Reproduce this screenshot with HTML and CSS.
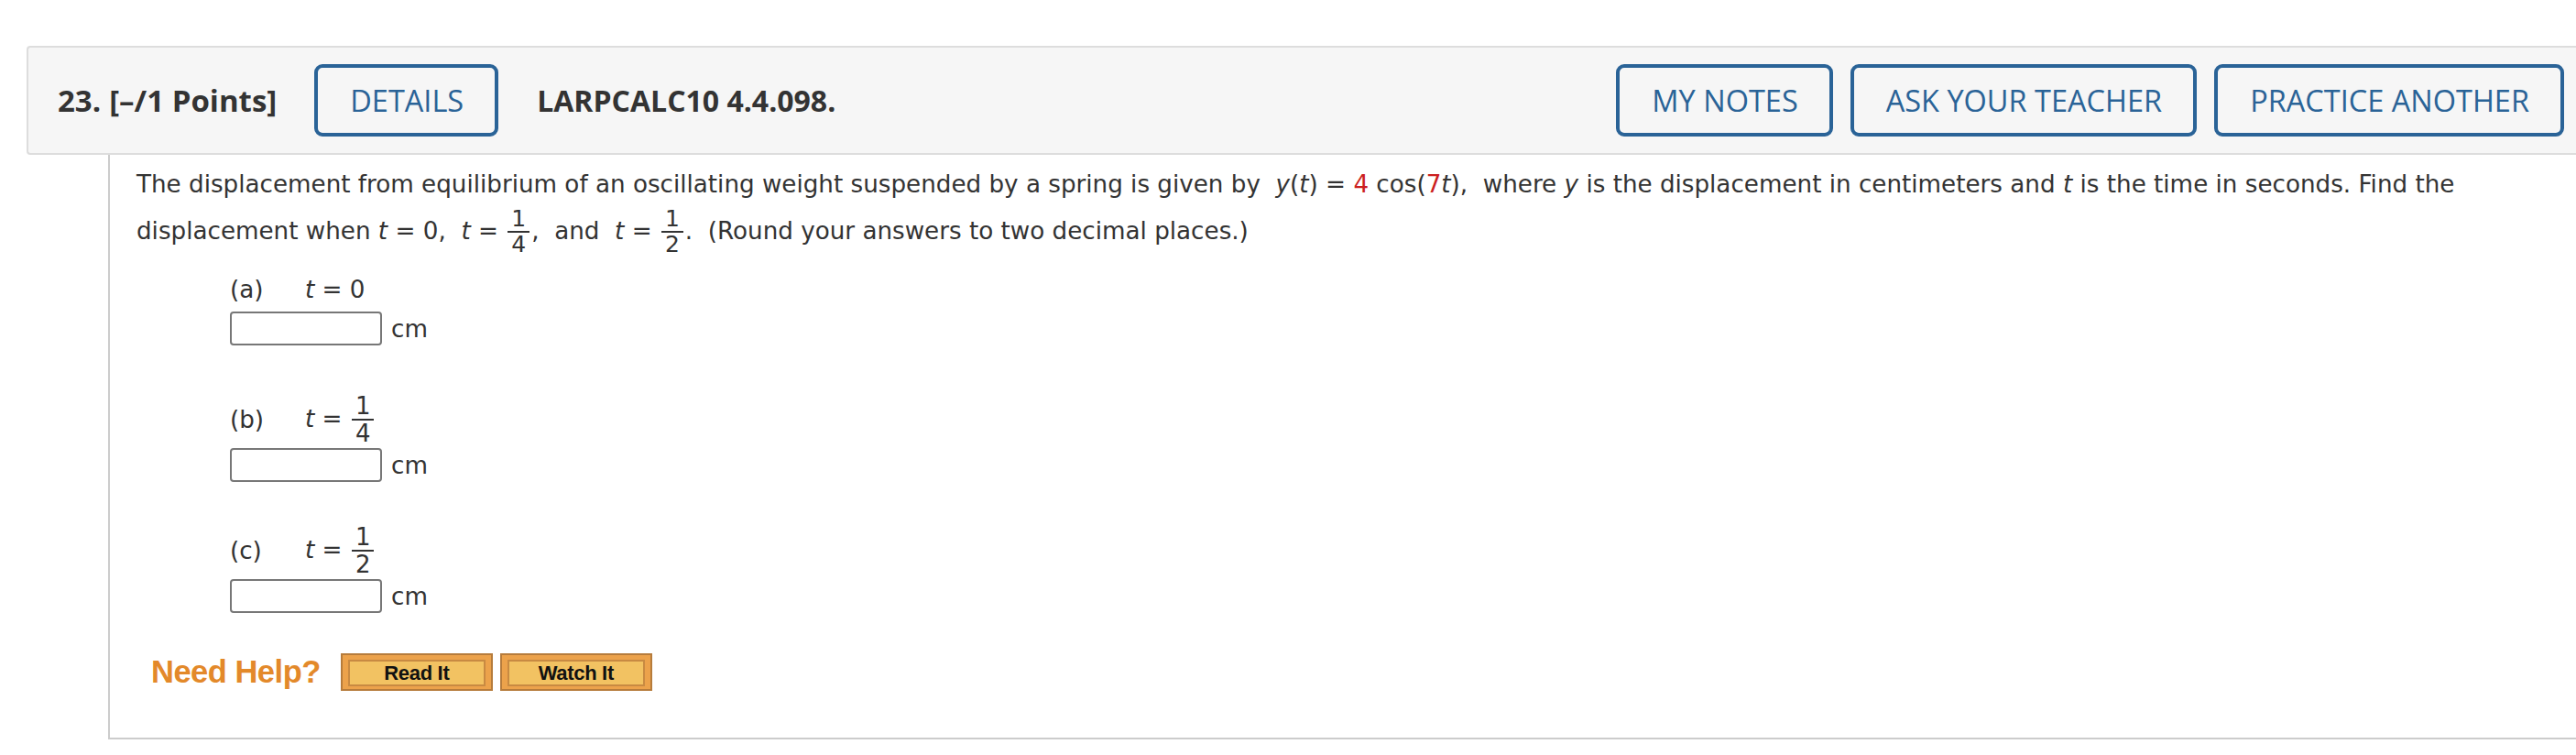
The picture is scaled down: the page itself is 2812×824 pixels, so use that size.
FILE: index.html
```html
<!DOCTYPE html>
<html>
<head>
<meta charset="utf-8">
<link rel="stylesheet" href="styles.css">
</head>
<body>
<div class="question">
  <div class="qhead">
    <span class="qnum">23.</span>
    <span class="qpts">[–/1 Points]</span>
    <span class="btn">DETAILS</span>
    <span class="qid">LARPCALC10 4.4.098.</span>
    <div class="actions">
      <span class="btn">MY NOTES</span>
      <span class="btn">ASK YOUR TEACHER</span>
      <span class="btn">PRACTICE ANOTHER</span>
    </div>
  </div>
  <div class="qbody">
    <p class="stem">The displacement from equilibrium of an oscillating weight suspended by a spring is given by&nbsp; <i>y</i>(<i>t</i>) = <span class="red">4</span> cos(<span class="red">7</span><i>t</i>),&nbsp; where <i>y</i> is the displacement in centimeters and <i>t</i> is the time in seconds. Find the displacement when <i>t</i> = 0,&nbsp; <i>t</i> = <span class="frac"><span class="num">1</span><span class="den">4</span></span>,&nbsp; and&nbsp; <i>t</i> = <span class="frac"><span class="num">1</span><span class="den">2</span></span>.&nbsp; (Round your answers to two decimal places.)</p>

    <div class="part part-a">
      <div class="plabel"><span class="pl">(a)</span><span class="peq"><i>t</i> = 0</span></div>
      <div class="ans"><span class="box"></span><span class="unit">cm</span></div>
    </div>
    <div class="part part-b">
      <div class="plabel"><span class="pl">(b)</span><span class="peq"><i>t</i> = <span class="frac"><span class="num">1</span><span class="den">4</span></span></span></div>
      <div class="ans"><span class="box"></span><span class="unit">cm</span></div>
    </div>
    <div class="part part-c">
      <div class="plabel"><span class="pl">(c)</span><span class="peq"><i>t</i> = <span class="frac"><span class="num">1</span><span class="den">2</span></span></span></div>
      <div class="ans"><span class="box"></span><span class="unit">cm</span></div>
    </div>

    <div class="help">
      <span class="needhelp">Need Help?</span>
      <span class="hbtn"><span class="hinner">Read It</span></span>
      <span class="hbtn"><span class="hinner">Watch It</span></span>
    </div>
  </div>
</div>
</body>
</html>
```

FILE: styles.css
```css
html, body {
  margin: 0;
  padding: 0;
  background: #ffffff;
}

.question {
  padding-top: 50px;
  margin-left: 29px;
}

.qhead {
  display: flex;
  align-items: center;
  box-sizing: border-box;
  height: 119px;
  background: #f6f6f6;
  border: 2px solid #dddddd;
  border-right: none;
  border-radius: 4px 0 0 4px;
  padding-left: 32px;
  padding-right: 13px;
  font-family: "Open Sans", sans-serif;
  color: #333333;
}

.qnum {
  font-weight: 700;
  font-size: 33px;
}

.qpts {
  font-weight: 700;
  font-size: 33px;
  margin-left: 9px;
}

.qid {
  font-weight: 700;
  font-size: 32px;
  margin-left: 42px;
}

.btn {
  display: inline-flex;
  align-items: center;
  box-sizing: border-box;
  height: 79px;
  padding: 0 34px 0 35px;
  border: 4px solid #2a6397;
  border-radius: 9px;
  color: #2a6397;
  font-size: 32.5px;
  font-weight: 400;
  background: #f6f6f6;
}

.qpts + .btn {
  margin-left: 41px;
}

.actions {
  margin-left: auto;
  display: flex;
  gap: 19px;
}

.qbody {
  margin-left: 89px;
  border-left: 2px solid #cccccc;
  border-bottom: 2px solid #cccccc;
  height: 638px;
  box-sizing: border-box;
  padding-left: 29px;
  font-family: "DejaVu Sans", Verdana, sans-serif;
  color: #333333;
  font-size: 26.2px;
}

.stem {
  margin: 0;
  padding-top: 7px;
  line-height: 50px;
}

.red {
  color: #cc1f1f;
}

.frac {
  display: inline-flex;
  flex-direction: column;
  align-items: center;
  vertical-align: middle;
  font-size: 25px;
  line-height: 26px;
  margin: 0 2px;
}

.frac .num {
  border-bottom: 2px solid #333333;
  padding: 0 4px;
}

.part .frac {
  font-size: 26px;
  line-height: 28px;
}

.part {
  margin-left: 102px;
}

.plabel {
  display: flex;
  align-items: center;
}

.pl {
  width: 82px;
}

.part-a {
  margin-top: 16px;
}

.part-a .plabel {
  height: 40px;
}

.part-a .ans {
  margin-top: 4px;
}

.part-b {
  margin-top: 52px;
}

.part-c {
  margin-top: 46px;
}

.part-b .plabel, .part-c .plabel {
  height: 58px;
}

.ans {
  display: flex;
  align-items: center;
  margin-top: 2px;
}

.box {
  display: inline-block;
  box-sizing: border-box;
  width: 166px;
  height: 37px;
  border: 2px solid #777777;
  border-radius: 4px;
  background: #ffffff;
}

.unit {
  margin-left: 10px;
}

.help {
  display: flex;
  align-items: center;
  margin-top: 44px;
  margin-left: 16px;
}

.needhelp {
  font-family: "Liberation Sans", Arial, sans-serif;
  font-weight: 700;
  font-size: 34.5px;
  color: #e3892a;
  letter-spacing: -0.5px;
  margin-right: 22px;
}

.hbtn {
  display: inline-flex;
  box-sizing: border-box;
  width: 166px;
  height: 41px;
  padding: 5px 6px 3px 6px;
  background: #eca24b;
  border: 2px solid #b67c3c;
  margin-right: 8px;
}

.hinner {
  flex: 1;
  display: flex;
  align-items: center;
  justify-content: center;
  background: #f2c262;
  border: 2px solid #c88a42;
  font-family: "Liberation Sans", Arial, sans-serif;
  font-weight: 700;
  font-size: 22px;
  color: #111111;
  letter-spacing: -0.3px;
}
```
